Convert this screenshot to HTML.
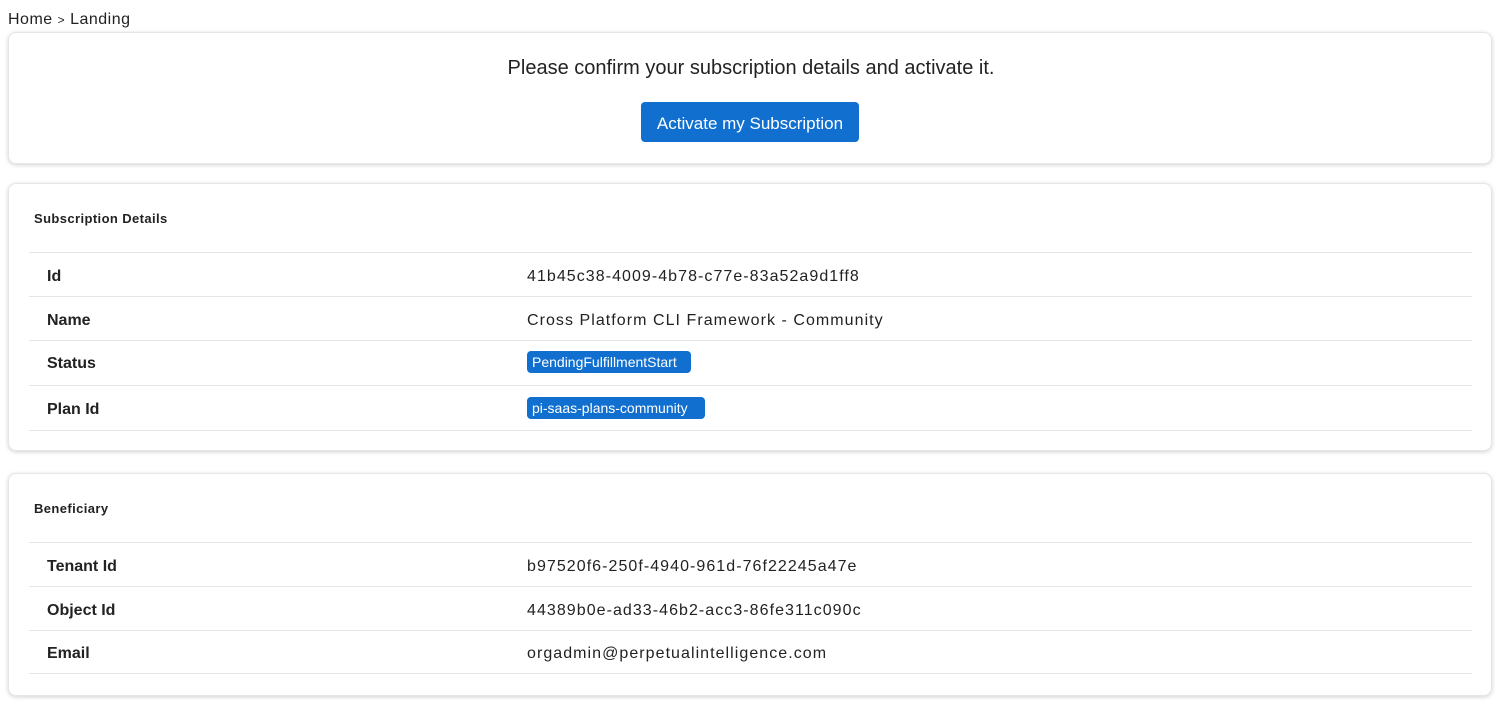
<!DOCTYPE html>
<html><head><style>
body{margin:0;width:1502px;height:706px;background:#fff;font-family:"Liberation Sans",sans-serif;color:#212529;position:relative;overflow:hidden}
.a{position:absolute}
.card{position:absolute;left:8px;width:1484px;border:1px solid #e6e6e6;border-radius:8px;box-shadow:0 1px 4px rgba(0,0,0,0.18);background:#fff;box-sizing:border-box}
.line{position:absolute;left:29px;width:1443px;height:1px;background:#e5e5e5}
.lab{position:absolute;left:47px;font-size:16px;font-weight:bold;color:#222}
.val{position:absolute;left:527px;font-size:16px;color:#222;letter-spacing:1.05px}
.badge{position:absolute;left:527px;background:#1170cf;color:#fff;font-size:14px;border-radius:4px;padding:2px 5px;height:22px;box-sizing:border-box;line-height:18px;white-space:nowrap}
.h{position:absolute;left:34px;font-size:13px;font-weight:bold;color:#222;letter-spacing:0.4px}
</style></head><body>
<div class="a" style="left:8px;top:11px;font-size:16px;color:#222;letter-spacing:0.5px">Home <span style="font-size:12px">&gt;</span> Landing</div>
<div class="card" style="top:32px;height:132px"></div>
<div class="a" style="left:0;width:1502px;top:57px;text-align:center;font-size:20px;color:#222">Please confirm your subscription details and activate it.</div>
<div class="a" style="left:641px;top:102px;width:218px;height:40px;background:#1170cf;border-radius:4px;color:#fff;font-size:17px;text-align:center;line-height:43px">Activate my Subscription</div>

<div class="card" style="top:183px;height:268px"></div>
<div class="h" style="top:211px">Subscription Details</div>
<div class="line" style="top:252px"></div>
<div class="lab" style="top:268px">Id</div><div class="val" style="top:268px">41b45c38-4009-4b78-c77e-83a52a9d1ff8</div>
<div class="line" style="top:296px"></div>
<div class="lab" style="top:312px">Name</div><div class="val" style="top:312px">Cross Platform CLI Framework - Community</div>
<div class="line" style="top:340px"></div>
<div class="lab" style="top:355px">Status</div><div class="badge" style="top:351px;width:164px">PendingFulfillmentStart</div>
<div class="line" style="top:385px"></div>
<div class="lab" style="top:401px">Plan Id</div><div class="badge" style="top:397px;width:178px">pi-saas-plans-community</div>
<div class="line" style="top:430px"></div>

<div class="card" style="top:473px;height:223px"></div>
<div class="h" style="top:501px">Beneficiary</div>
<div class="line" style="top:542px"></div>
<div class="lab" style="top:558px">Tenant Id</div><div class="val" style="top:558px">b97520f6-250f-4940-961d-76f22245a47e</div>
<div class="line" style="top:586px"></div>
<div class="lab" style="top:602px">Object Id</div><div class="val" style="top:602px">44389b0e-ad33-46b2-acc3-86fe311c090c</div>
<div class="line" style="top:630px"></div>
<div class="lab" style="top:645px">Email</div><div class="val" style="top:645px">orgadmin@perpetualintelligence.com</div>
<div class="line" style="top:673px"></div>
</body></html>
